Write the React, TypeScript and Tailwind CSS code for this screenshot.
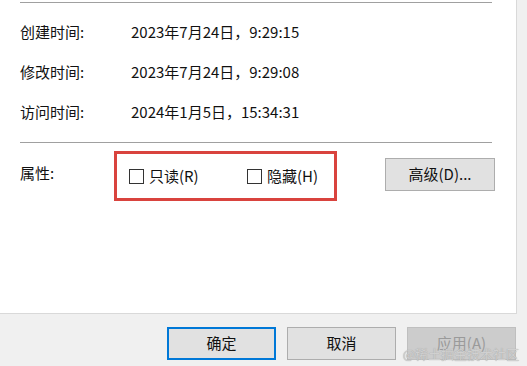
export default function App() {
  const rows = [
    { label: '创建时间:', value: '2023年7月24日，9:29:15' },
    { label: '修改时间:', value: '2023年7月24日，9:29:08' },
    { label: '访问时间:', value: '2024年1月5日，15:34:31' },
  ];

  return (
    <div
      className="w-[527px] h-[366px] bg-[#f0f0f0] text-[15px] text-[#111] overflow-hidden relative"
      style={{ fontFamily: '"Noto Sans CJK SC", "Noto Sans", sans-serif' }}
    >
      {/* 属性面板 */}
      <div className="w-[517px] h-[314px] bg-white border-r border-b border-[#d9d9d9] pl-[20px] pt-[2px]">
        <div className="w-[472px] h-px bg-[#a0a0a0]" />
        <div className="mt-[9px]">
          {rows.map(row => (
            <div key={row.label} className="h-[40px] flex items-center">
              <div className="w-[111px] shrink-0">{row.label}</div>
              <div>{row.value}</div>
            </div>
          ))}
        </div>
        <div className="mt-[10px] w-[472px] h-px bg-[#a0a0a0]" />

        {/* 属性 */}
        <div className="mt-[8px] flex items-start">
          <div className="w-[94px] shrink-0 mt-[11px]">属性:</div>
          <div className="w-[223px] h-[50px] shrink-0 border-[3px] border-[#d9433e] flex items-center pl-[12px]">
            <label className="flex items-center w-[118px] shrink-0">
              <span className="w-[15px] h-[15px] shrink-0 border border-[#333] bg-white" />
              <span className="ml-[5px]">只读(R)</span>
            </label>
            <label className="flex items-center">
              <span className="w-[15px] h-[15px] shrink-0 border border-[#333] bg-white" />
              <span className="ml-[5px]">隐藏(H)</span>
            </label>
          </div>
          <button className="ml-[48px] mt-[7px] w-[110px] h-[33px] shrink-0 bg-[#e1e1e1] border border-[#adadad] flex items-center justify-center">
            高级(D)...
          </button>
        </div>
      </div>

      {/* 底部按钮 */}
      <div className="flex justify-end gap-[11px] pr-[11px] mt-[13px]">
        <button className="w-[109px] h-[33px] bg-[#e1e1e1] border-2 border-[#0078d7] flex items-center justify-center">
          确定
        </button>
        <button className="w-[109px] h-[33px] bg-[#e1e1e1] border border-[#adadad] flex items-center justify-center">
          取消
        </button>
        <button className="w-[109px] h-[33px] bg-[#cccccc] border border-[#bfbfbf] text-[#9a9a9a] flex items-center justify-center">
          应用(A)
        </button>
      </div>

      {/* 水印 */}
      <div className="absolute right-[8px] bottom-[3px] text-[13px] text-[#d0d0d0] [text-shadow:0_0_1px_#999]">
        @稀土掘金技术社区
      </div>
    </div>
  );
}
